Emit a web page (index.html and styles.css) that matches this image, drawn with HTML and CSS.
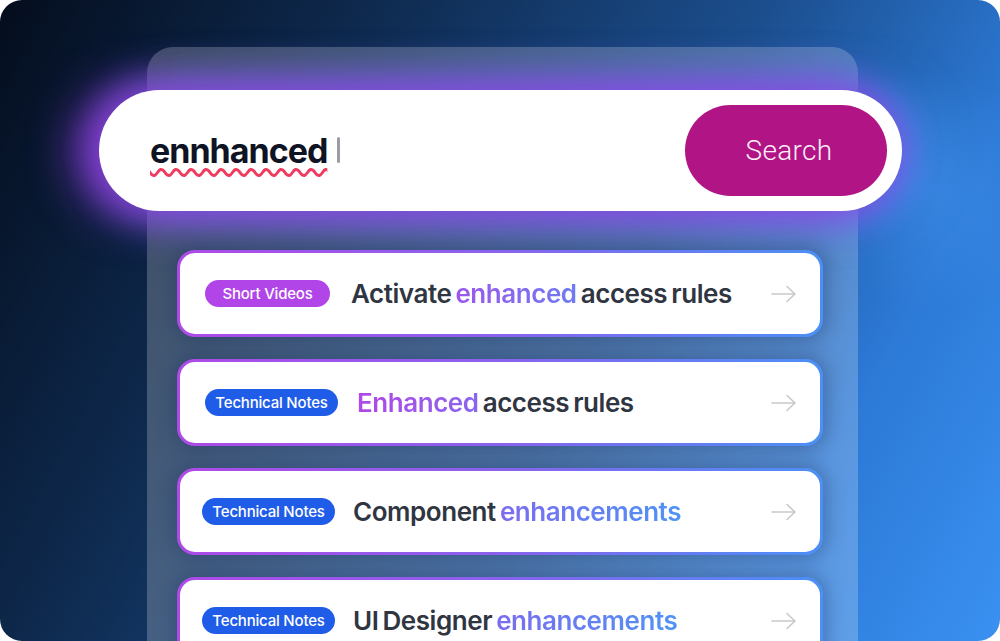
FILE: index.html
```html
<!DOCTYPE html>
<html lang="en">
<head>
<meta charset="utf-8">
<title>Search</title>
<link rel="stylesheet" href="styles.css">
</head>
<body>
<div class="frame">
  <div class="panel">
    <div class="search">
      <div class="query"><span class="typed">ennhanced</span><span class="caret"></span></div>
      <button class="btn">Search</button>
    </div>
    <div class="results">
      <div class="card">
        <span class="badge badge-video">Short Videos</span>
        <span class="title title-wide">Activate <span class="hl hl-1">enhanced</span> access rules</span>
        <svg class="arrow" viewBox="0 0 26 18" width="26" height="18"><path d="M1 9H24M16 1.5L24 9L16 16.5" fill="none" stroke="#c9c9cd" stroke-width="1.6" stroke-linecap="round" stroke-linejoin="round"/></svg>
      </div>
      <div class="card">
        <span class="badge badge-notes badge-wide">Technical Notes</span>
        <span class="title title-mid"><span class="hl hl-2">Enhanced</span> access rules</span>
        <svg class="arrow" viewBox="0 0 26 18" width="26" height="18"><path d="M1 9H24M16 1.5L24 9L16 16.5" fill="none" stroke="#c9c9cd" stroke-width="1.6" stroke-linecap="round" stroke-linejoin="round"/></svg>
      </div>
      <div class="card">
        <span class="badge badge-notes">Technical Notes</span>
        <span class="title">Component <span class="hl hl-3">enhancements</span></span>
        <svg class="arrow" viewBox="0 0 26 18" width="26" height="18"><path d="M1 9H24M16 1.5L24 9L16 16.5" fill="none" stroke="#c9c9cd" stroke-width="1.6" stroke-linecap="round" stroke-linejoin="round"/></svg>
      </div>
      <div class="card">
        <span class="badge badge-notes">Technical Notes</span>
        <span class="title">UI Designer <span class="hl hl-3">enhancements</span></span>
        <svg class="arrow" viewBox="0 0 26 18" width="26" height="18"><path d="M1 9H24M16 1.5L24 9L16 16.5" fill="none" stroke="#c9c9cd" stroke-width="1.6" stroke-linecap="round" stroke-linejoin="round"/></svg>
      </div>
    </div>
  </div>
</div>
</body>
</html>
```
FILE: styles.css
```css
* { box-sizing: border-box; }
html, body { margin: 0; padding: 0; background: #ffffff; }
body { width: 1000px; height: 641px; overflow: hidden; font-family: Inter, "Noto Sans", sans-serif; }

.frame {
  width: 1000px;
  height: 641px;
  border-radius: 22px;
  overflow: hidden;
  padding-top: 47px;
  background:
    radial-gradient(circle at 930px 190px, rgba(70,150,240,0.45) 0, rgba(70,150,240,0) 120px),
    linear-gradient(118deg, #040d1d 0%, #0f2c52 30%, #1c4f8f 58%, #2c79d6 80%, #3a91f1 100%);
}

.panel {
  margin-left: 147px;
  width: 711px;
  height: 620px;
  border-radius: 26px 26px 0 0;
  background: rgba(255,255,255,0.22);
  padding-top: 43px;
}

.search {
  margin: 0 -44px 0 -48px;
  height: 121px;
  border-radius: 61px;
  background: #ffffff;
  display: flex;
  align-items: center;
  justify-content: space-between;
  padding: 0 15px 0 51px;
  box-shadow:
    -18px 0 45px 8px rgba(150,60,225,0.75),
    0 0 30px 6px rgba(140,80,230,0.55),
    18px 0 45px 6px rgba(70,150,245,0.6);
}

.query { display: flex; align-items: center; gap: 10px; }
.typed {
  font-family: Inter, sans-serif;
  font-weight: 700;
  font-size: 34px;
  letter-spacing: -1px;
  color: #0e1424;
  text-decoration: underline wavy #ef3b5f;
  text-decoration-thickness: 2.5px;
  text-underline-offset: 5px;
}
.caret {
  width: 3px;
  height: 26px;
  border-radius: 2px;
  background: #9c9ca4;
  margin-top: -2px;
}

.btn {
  width: 202px;
  height: 91px;
  border: 0;
  border-radius: 46px;
  background: #b01485;
  color: #fbeef7;
  font-family: Roboto, "Open Sans", sans-serif;
  font-weight: 300;
  font-size: 28px;
  letter-spacing: 0.3px;
  padding: 0 0 0 6px;
}

.results {
  margin-top: 39px;
  padding: 0 35px 0 30px;
  display: flex;
  flex-direction: column;
  gap: 22px;
}

.card {
  height: 87px;
  flex: none;
  border: 3px solid transparent;
  border-radius: 18px;
  background:
    linear-gradient(#ffffff, #ffffff) padding-box,
    linear-gradient(90deg, #ae4ae8 0%, #8a62ee 50%, #4b90f6 100%) border-box;
  display: flex;
  align-items: center;
  padding: 0 23px 0 25px;
  box-shadow: 0 0 18px 4px rgba(25,45,95,0.35);
}

.badge {
  flex: none;
  height: 27px;
  line-height: 27px;
  border-radius: 14px;
  color: #ffffff;
  font-size: 15px;
  font-weight: 500;
  letter-spacing: -0.2px;
  text-align: center;
  padding: 0;
}
.badge-video { background: #b145e8; width: 125px; }
.badge-notes { background: #1f5de9; width: 133px; margin-left: -3px; }
.badge-wide { margin-left: 0; }

.title {
  margin-left: 18px;
  font-size: 26px;
  font-weight: 600;
  letter-spacing: -0.45px;
  word-spacing: -2px;
  color: #2f3541;
  white-space: nowrap;
}
.title-wide { margin-left: 21px; }
.title-mid { margin-left: 19px; }

.hl {
  -webkit-background-clip: text;
  background-clip: text;
  color: transparent;
  -webkit-text-fill-color: transparent;
}
.hl-1 { background-image: linear-gradient(90deg, #9c56ee, #6e7cf1); }
.hl-2 { background-image: linear-gradient(90deg, #b247e7, #8866ef); }
.hl-3 { background-image: linear-gradient(90deg, #7b6cf0, #4f93f5); }

.arrow { margin-left: auto; flex: none; }
```
